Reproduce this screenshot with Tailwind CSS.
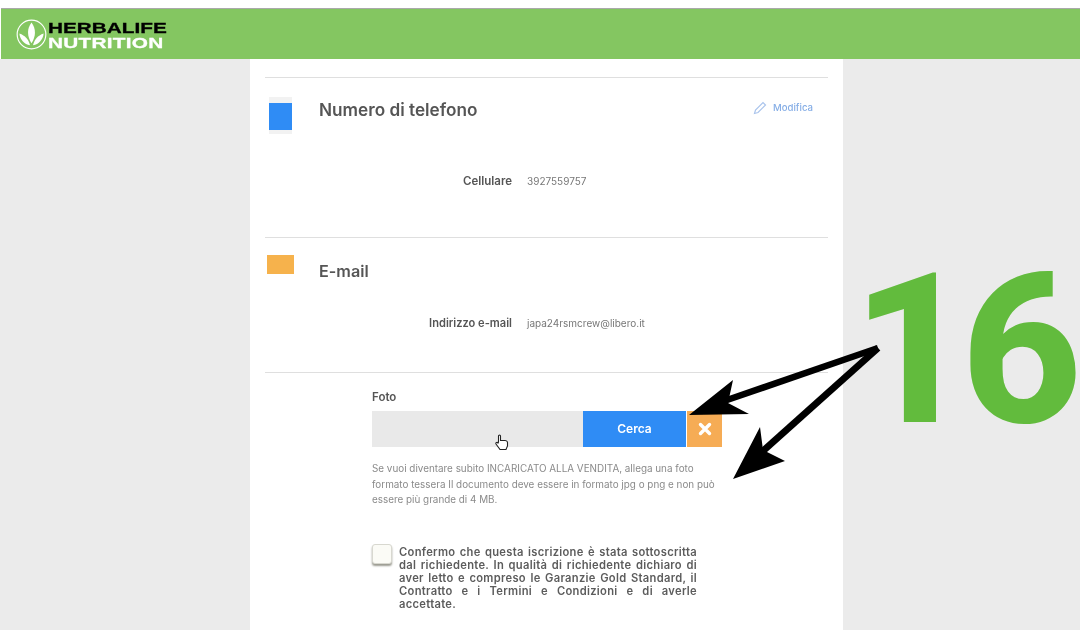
<!DOCTYPE html>
<html lang="it">
<head>
    <meta charset="UTF-8">
    <meta name="viewport" content="width=device-width, initial-scale=1.0">
    <script src="https://cdn.jsdelivr.net/npm/@tailwindcss/browser@4"></script>
    <title>Herbalife Nutrition</title>
</head>
<body class="relative w-[1080px] h-[636px] overflow-hidden bg-white font-['Inter',sans-serif]">

    <!-- top bar -->
    <div class="h-[8px] bg-white"></div>
    <header class="h-[51px] ml-[1px] bg-[#84c661] border-t border-[#a9a9a9] flex items-start pl-[15px] pt-[10px]">
        <svg class="w-[31px] h-[31px]" viewBox="0 0 32 32">
            <circle cx="16" cy="16" r="14.8" fill="none" stroke="#fff" stroke-width="1.2"/>
            <path d="M16 3.5 C11 10 11.5 18 16 25 C20.5 18 21 10 16 3.5Z" fill="#fff"/>
            <path d="M3.5 15 C4 21 8.5 26.5 14.5 27 C13 21.5 9.5 17 3.5 15Z" fill="#fff"/>
            <path d="M28.5 15 C28 21 23.5 26.5 17.5 27 C19 21.5 22.5 17 28.5 15Z" fill="#fff"/>
        </svg>
        <div class="ml-[1px] mt-[1px] font-['Liberation_Sans',sans-serif] font-bold text-[15.5px] leading-[15px] scale-x-[1.34] origin-left [-webkit-text-stroke:0.3px_currentColor]">
            <div class="text-black">HERBALIFE</div>
            <div class="text-white tracking-[0.2px]">NUTRITION</div>
        </div>
    </header>

    <main class="flex h-[571px]">
        <div class="w-[250px] bg-[#ebebeb]"></div>

        <div class="w-[593px] bg-white px-[15px] blur-[0.3px]">
            <!-- telefono -->
            <section class="h-[160px] mt-[18px] border-t border-[#dfdfdf] flex flex-col">
                <div class="flex items-start pt-[19px] pl-[4px]">
                    <div class="w-[23px] h-[37px] bg-[#f2f2f2] pt-[6px]">
                        <div class="h-[27px] bg-[#2f8cf5]"></div>
                    </div>
                    <h2 class="ml-[27px] mt-[3px] text-[17.2px] leading-[20px] font-semibold text-[#555555]">Numero di telefono</h2>
                    <a class="ml-auto mr-[15px] mt-[4px] flex items-center gap-[6px] text-[9.6px] text-[#86aee6] font-medium" href="#">
                        <svg class="w-[14px] h-[14px]" viewBox="0 0 14 14" fill="none" stroke="#aac4ec" stroke-width="1.2">
                            <path d="M1.5 12.5 L2.5 9 L10 1.5 L12.5 4 L5 11.5 Z"/>
                        </svg>
                        Modifica
                    </a>
                </div>
                <div class="flex items-center mt-[39px] text-[11.5px] leading-[16px]">
                    <span class="w-[247px] text-right font-semibold text-[#555555]">Cellulare</span>
                    <span class="ml-[15px] text-[10px] text-[#777777]">3927559757</span>
                </div>
            </section>

            <!-- e-mail -->
            <section class="h-[135px] border-t border-[#dfdfdf] flex flex-col">
                <div class="flex items-start pt-[17px] pl-[2px]">
                    <div class="w-[27px] h-[19px] bg-[#f6b24c]"></div>
                    <h2 class="ml-[25px] mt-[6px] text-[16.2px] leading-[20px] font-semibold text-[#555555]">E-mail</h2>
                </div>
                <div class="flex items-center mt-[34px] text-[11.1px] leading-[16px]">
                    <span class="w-[247px] text-right font-semibold text-[#555555]">Indirizzo e-mail</span>
                    <span class="ml-[15px] text-[10px] text-[#777777]">japa24rsmcrew@libero.it</span>
                </div>
            </section>

            <!-- foto -->
            <section class="border-t border-[#dfdfdf] pl-[107px] pt-[17px]">
                <div class="text-[11.5px] leading-[14px] font-semibold text-[#555555]">Foto</div>
                <div class="flex h-[36px] w-[350px] mt-[7px]">
                    <div class="w-[211px] bg-[#e9e9e9] relative">
                        <svg class="absolute left-[123px] top-[23px] w-[14px] h-[17px]" viewBox="0 0 14 17">
                            <path d="M3.5 8 V2 a1 1 0 0 1 2 0 V6.5 h4 a2.5 2.5 0 0 1 3 2 V12 l-1.5 3.5 H5 L1 10 a1 1 0 0 1 2-1 Z" fill="#fff" stroke="#222" stroke-width="1.1"/>
                        </svg>
                    </div>
                    <button class="w-[103px] bg-[#2f8cf5] text-white text-[12px] font-semibold">Cerca</button>
                    <button class="w-[35px] ml-[1px] bg-[#f6ac55] flex items-center justify-center">
                        <svg class="w-[14px] h-[14px]" viewBox="0 0 14 14"><path d="M2.5 2.5 L11.5 11.5 M11.5 2.5 L2.5 11.5" stroke="#fff" stroke-width="3.4" stroke-linecap="round"/></svg>
                    </button>
                </div>
                <p class="w-[348px] mt-[14px] text-[9.9px] leading-[15.5px] text-[#8a8a8a]">Se vuoi diventare subito INCARICATO ALLA VENDITA, allega una foto formato tessera Il documento deve essere in formato jpg o png e non può essere più grande di 4 MB.</p>

                <div class="flex items-start mt-[36px]">
                    <div class="w-[20px] h-[20px] shrink-0 rounded-[3px] bg-[#fbfbf6] border border-[#d8d8d0] shadow-[0_2px_2px_#9a9a90]"></div>
                    <p class="ml-[7px] w-[298px] mt-[2px] text-[11.2px] leading-[13px] tracking-[0.3px] font-semibold text-[#5c5c5c] text-justify">Confermo che questa iscrizione è stata sottoscritta dal richiedente. In qualità di richiedente dichiaro di aver letto e compreso le Garanzie Gold Standard, il Contratto e i Termini e Condizioni e di averle accettate.</p>
                </div>
            </section>
        </div>

        <div class="flex-1 bg-[#ebebeb]"></div>
    </main>

    <div class="h-[6px] bg-white"></div>

    <!-- big number and arrows lie over the page -->
    <div class="absolute left-[852px] top-[230px] font-['Roboto',sans-serif] font-extrabold text-[210px] leading-[240px] text-[#62bb3d] tracking-[-12px]">16</div>
    <svg class="absolute inset-0 w-[1080px] h-[636px]" viewBox="0 0 1080 636">
        <path d="M878 348 L727 400" stroke="#000" stroke-width="6.5" fill="none"/>
        <path d="M878 348 L763 451" stroke="#000" stroke-width="7" fill="none"/>
        <path d="M689 415 L733 380 L728 403 L749 414 Z" fill="#000"/>
        <path d="M733 479 L760 427 L763 450 L785 461 Z" fill="#000"/>
    </svg>
</body>
</html>
